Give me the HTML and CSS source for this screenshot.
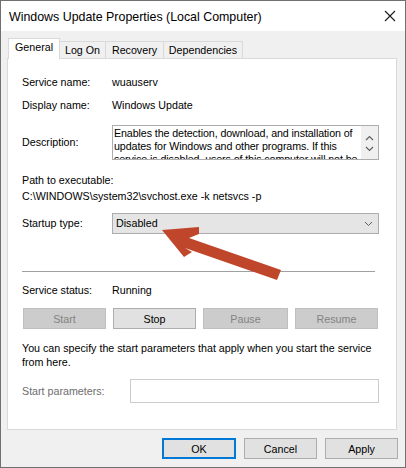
FILE: index.html
```html
<!DOCTYPE html>
<html>
<head>
<meta charset="utf-8">
<link rel="stylesheet" href="styles.css">
</head>
<body>
<div class="window">
  <div class="titlebar">
    <span class="title">Windows Update Properties (Local Computer)</span>
    <svg class="close" width="12" height="12" viewBox="0 0 12 12"><path d="M1 1 L11 11 M11 1 L1 11" stroke="#1a1a1a" stroke-width="1.1" fill="none"/></svg>
  </div>
  <div class="client">
    <div class="tabs">
      <div class="tab active">General</div>
      <div class="tab">Log On</div>
      <div class="tab">Recovery</div>
      <div class="tab">Dependencies</div>
    </div>
    <div class="panel">
      <div class="row r-service"><span class="label">Service name:</span><span class="value">wuauserv</span></div>
      <div class="row r-display"><span class="label">Display name:</span><span class="value">Windows Update</span></div>
      <div class="row r-desc">
        <span class="label">Description:</span>
        <div class="descbox">
          <div class="desctext">Enables the detection, download, and installation of<br>updates for Windows and other programs. If this<br>service is disabled, users of this computer will not be</div>
          <div class="scroll">
            <svg width="9" height="6" viewBox="0 0 9 6"><path d="M1 5 L4.5 1.5 L8 5" stroke="#606060" stroke-width="1.2" fill="none"/></svg>
            <svg width="9" height="6" viewBox="0 0 9 6"><path d="M1 1 L4.5 4.5 L8 1" stroke="#606060" stroke-width="1.2" fill="none"/></svg>
          </div>
        </div>
      </div>
      <div class="line r-pathlabel">Path to executable:</div>
      <div class="line r-path">C:\WINDOWS\system32\svchost.exe -k netsvcs -p</div>
      <div class="row r-startup">
        <span class="label">Startup type:</span>
        <div class="combo"><span>Disabled</span>
          <svg width="9" height="6" viewBox="0 0 9 6"><path d="M1 1 L4.5 4.5 L8 1" stroke="#606060" stroke-width="1" fill="none"/></svg>
        </div>
      </div>
      <div class="sep"></div>
      <div class="row r-status"><span class="label">Service status:</span><span class="value">Running</span></div>
      <div class="btnrow">
        <div class="btn disabled">Start</div>
        <div class="btn">Stop</div>
        <div class="btn disabled">Pause</div>
        <div class="btn disabled">Resume</div>
      </div>
      <div class="para">You can specify the start parameters that apply when you start the service<br>from here.</div>
      <div class="row r-params">
        <span class="label param-label">Start parameters:</span>
        <div class="paraminput"></div>
      </div>
    </div>
    <div class="dlgbtns">
      <div class="btn dlg default">OK</div>
      <div class="btn dlg">Cancel</div>
      <div class="btn dlg">Apply</div>
    </div>
  </div>
  <svg class="arrow" width="406" height="468" viewBox="0 0 406 468">
    <polygon points="162,230 199,227 199,234 189,238 281,270 277,280 185,248 192,252 184,257" fill="#c0462b"/>
  </svg>
</div>
</body>
</html>
```

FILE: styles.css
```css
* { box-sizing: border-box; }
html, body { margin: 0; padding: 0; }
body {
  width: 406px;
  height: 468px;
  overflow: hidden;
  font-family: "Liberation Sans", Arial, sans-serif;
  font-size: 10.7px;
  color: #000;
}
.window {
  position: relative;
  width: 406px;
  height: 468px;
  border: 1px solid #707070;
  display: flex;
  flex-direction: column;
  background: #f0f0f0;
}
.titlebar {
  height: 30px;
  background: #fff;
  display: flex;
  align-items: center;
  padding-left: 8px;
  padding-right: 9px;
  justify-content: space-between;
  flex: none;
}
.title {
  font-size: 12.4px;
  color: #000;
  padding-top: 1px;
}
.client {
  flex: 1;
  display: flex;
  flex-direction: column;
}
.tabs {
  margin-top: 7px;
  height: 20px;
  display: flex;
  align-items: flex-end;
  padding-left: 7px;
  flex: none;
}
.tab {
  height: 17px;
  border: 1px solid #d9d9d9;
  border-bottom: none;
  background: #f0f0f0;
  line-height: 16px;
  padding: 0;
  margin-left: -1px;
  text-align: center;
  white-space: nowrap;
}
.tab:nth-child(2) { width: 47px; }
.tab:nth-child(3) { width: 59px; }
.tab:nth-child(4) { width: 80px; }
.tab.active {
  margin-left: 0;
  width: 52px;
  height: 21px;
  margin-bottom: -1px;
  background: #fff;
  position: relative;
  z-index: 1;
  line-height: 17px;
}
.panel {
  margin-left: 6px;
  width: 390px;
  height: 372px;
  background: #fff;
  border: 1px solid #d9d9d9;
  padding: 16px 17px 0 14px;
  flex: none;
}
.row {
  display: flex;
  align-items: center;
  line-height: 15px;
}
.label { width: 90px; flex: none; }
.r-display { margin-top: 8px; }
.r-desc { margin-top: 12px; }
.descbox {
  flex: 1;
  height: 35px;
  border: 1px solid #adadad;
  display: flex;
  overflow: hidden;
}
.desctext {
  flex: 1;
  padding: 1px 0 0 1px;
  line-height: 13px;
  white-space: nowrap;
  overflow: hidden;
  letter-spacing: -0.1px;
}
.scroll {
  width: 17px;
  flex: none;
  background: #f0f0f0;
  display: flex;
  flex-direction: column;
  align-items: center;
  padding-top: 9px;
  gap: 5px;
}
.line { line-height: 15px; }
.r-pathlabel { margin-top: 13px; }
.r-path { margin-top: 1px; }
.r-startup { margin-top: 9px; }
.combo {
  flex: 1;
  height: 21px;
  border: 1px solid #adadad;
  background: #e5e5e5;
  display: flex;
  align-items: center;
  justify-content: space-between;
  padding: 0 5px 0 3px;
}
.sep {
  margin-top: 37px;
  margin-right: 4px;
  height: 1px;
  background: #a0a0a0;
}
.r-status { margin-top: 11px; }
.btnrow {
  margin-top: 10px;
  margin-left: 1px;
  display: grid;
  grid-template-columns: 83px 83px 85px 83px;
  column-gap: 7px;
}
.btn {
  height: 21px;
  border: 1px solid #adadad;
  background: #e1e1e1;
  display: flex;
  align-items: center;
  justify-content: center;
  color: #000;
}
.btn.disabled {
  background: #cccccc;
  border-color: #bfbfbf;
  color: #838383;
}
.para {
  margin-top: 12px;
  line-height: 14px;
  white-space: nowrap;
}
.r-params { margin-top: 10px; }
.param-label { width: 108px; color: #6d6d6d; }
.paraminput {
  flex: 1;
  height: 24px;
  border: 1px solid #cccccc;
  background: #fff;
}
.dlgbtns {
  margin-top: 8px;
  display: flex;
  justify-content: flex-end;
  gap: 8px;
  padding-right: 7px;
  flex: none;
}
.btn.dlg { width: 73px; }
.btn.default {
  width: 74px;
  border: 2px solid #0078d7;
}
.arrow {
  position: absolute;
  left: -1px;
  top: -1px;
  pointer-events: none;
}
```
